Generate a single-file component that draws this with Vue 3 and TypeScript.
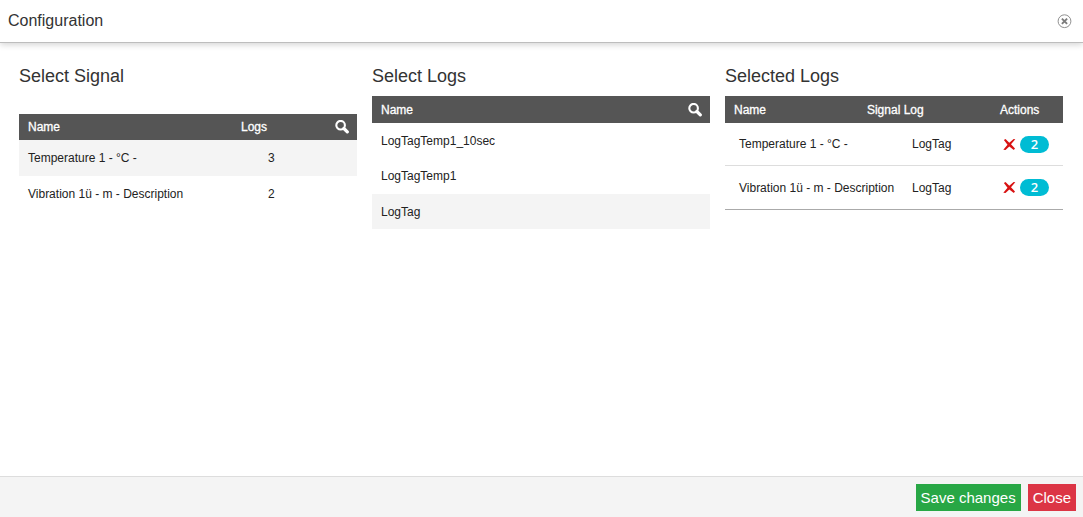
<script setup lang="ts">
import { ref } from 'vue'

interface Signal {
  name: string
  logs: number
}
interface SelectedLog {
  name: string
  log: string
  count: number
}

const signals: Signal[] = [
  { name: 'Temperature 1 - °C -', logs: 3 },
  { name: 'Vibration 1ü - m - Description', logs: 2 },
]
const logs: string[] = ['LogTagTemp1_10sec', 'LogTagTemp1', 'LogTag']
const activeSignal = ref(0)
const activeLog = ref(2)
const selected = ref<SelectedLog[]>([
  { name: 'Temperature 1 - °C -', log: 'LogTag', count: 2 },
  { name: 'Vibration 1ü - m - Description', log: 'LogTag', count: 2 },
])

function remove(index: number) {
  selected.value.splice(index, 1)
}
</script>

<template>
  <div class="dialog" role="dialog" aria-labelledby="dialog-title">
    <header class="top">
      <h1 id="dialog-title">Configuration</h1>
      <button class="icon dismiss" type="button" aria-label="Dismiss">
        <svg width="15" height="15" viewBox="0 0 15 15" fill="none">
          <circle cx="7.5" cy="7.2" r="6.4" stroke="#909090" />
          <path d="M4.9 4.6l5.2 5.2M10.1 4.6l-5.2 5.2" stroke="#7c7c7c" stroke-width="1.9" />
        </svg>
      </button>
    </header>

    <main class="columns">
      <section>
        <h2 id="signal-title">Select Signal</h2>
        <table class="signals" aria-labelledby="signal-title">
          <thead>
            <tr>
              <th class="c-name">Name</th>
              <th class="c-logs">Logs</th>
              <th class="c-search">
                <button class="icon" type="button" aria-label="Search signals">
                  <svg width="14" height="14" viewBox="0 0 14 14" fill="none" stroke="#fff">
                    <circle cx="5.6" cy="5.2" r="4.3" stroke-width="2.1" />
                    <path d="M8.9 8.5l3.4 3.4" stroke-width="3.2" stroke-linecap="round" />
                  </svg>
                </button>
              </th>
            </tr>
          </thead>
          <tbody>
            <tr v-for="(s, i) in signals" :key="s.name" :class="{ active: i === activeSignal }" @click="activeSignal = i">
              <td>{{ s.name }}</td>
              <td class="count">{{ s.logs }}</td>
              <td></td>
            </tr>
          </tbody>
        </table>
      </section>

      <section>
        <h2 id="logs-title">Select Logs</h2>
        <table class="logs" aria-labelledby="logs-title">
          <thead>
            <tr>
              <th>Name</th>
              <th class="c-search">
                <button class="icon" type="button" aria-label="Search logs">
                  <svg width="14" height="14" viewBox="0 0 14 14" fill="none" stroke="#fff">
                    <circle cx="5.6" cy="5.2" r="4.3" stroke-width="2.1" />
                    <path d="M8.9 8.5l3.4 3.4" stroke-width="3.2" stroke-linecap="round" />
                  </svg>
                </button>
              </th>
            </tr>
          </thead>
          <tbody>
            <tr v-for="(l, i) in logs" :key="l" :class="{ active: i === activeLog }" @click="activeLog = i">
              <td colspan="2">{{ l }}</td>
            </tr>
          </tbody>
        </table>
      </section>

      <section>
        <h2 id="selected-title">Selected Logs</h2>
        <table class="selected" aria-labelledby="selected-title">
          <colgroup>
            <col class="s-name">
            <col class="s-indent">
            <col>
            <col class="s-actions">
          </colgroup>
          <thead>
            <tr>
              <th>Name</th>
              <th class="flush" colspan="2">Signal Log</th>
              <th class="flush">Actions</th>
            </tr>
          </thead>
          <tbody>
            <tr v-for="(s, i) in selected" :key="s.name">
              <td colspan="2">{{ s.name }}</td>
              <td class="flush">{{ s.log }}</td>
              <td class="flush">
                <div class="actions">
                  <button class="icon" type="button" aria-label="Remove" @click="remove(i)">
                    <svg width="13" height="13" viewBox="0 0 13 13">
                      <path d="M.9 2L2.5 .9L6.3 4.7L10.6 1L12.3 1.2L8 6.3L12 10.6L10.8 12.1L6.3 8.4L2.5 12L.3 11.8L4.5 6.7Z" fill="#d81212" />
                    </svg>
                  </button>
                  <span class="badge">{{ s.count }}</span>
                </div>
              </td>
            </tr>
          </tbody>
        </table>
      </section>
    </main>

    <footer class="bottom">
      <button class="btn save" type="button">Save changes</button>
      <button class="btn close" type="button">Close</button>
    </footer>
  </div>
</template>

<style>
body {
  margin: 0;
  background: #fff;
}
</style>

<style scoped>
.dialog {
  display: flex;
  flex-direction: column;
  min-height: 100vh;
  font-family: "Liberation Sans", Arial, sans-serif;
  font-size: 12px;
  line-height: 16px;
  color: #222;
}
button {
  font-family: inherit;
  border: 0;
  cursor: pointer;
}
.top {
  display: flex;
  align-items: center;
  justify-content: space-between;
  height: 42px;
  padding: 0 11px 0 8px;
  border-bottom: 1px solid #bdbdbd;
  box-shadow: 0 2px 6px rgba(0, 0, 0, 0.16);
}
h1 {
  margin: 0;
  font-size: 16px;
  font-weight: 400;
  line-height: 20px;
  color: #333;
}
.icon {
  display: block;
  padding: 0;
  background: none;
}
.icon svg {
  display: block;
}
.columns {
  flex: 1;
  display: grid;
  grid-template-columns: repeat(3, minmax(0, 1fr));
  gap: 15px;
  align-items: start;
  padding: 21px 20px 20px 19px;
}
h2 {
  margin: 0 0 8px;
  font-size: 18px;
  font-weight: 400;
  line-height: 24px;
  color: #333;
}
table {
  width: 100%;
  table-layout: fixed;
  border-collapse: separate;
  border-spacing: 0;
}
th,
td {
  box-sizing: border-box;
  padding: 0 0 0 9px;
  text-align: left;
  font-weight: 400;
  white-space: nowrap;
}
th {
  height: 27px;
  background: #555;
  color: #fff;
  -webkit-text-stroke: 0.3px #fff;
}
td {
  height: 36px;
}
.active td {
  background: #f4f4f4;
}
.signals {
  margin-top: 26px;
}
.signals th {
  height: 26px;
}
.c-logs {
  width: 85px;
  padding-left: 0;
}
.c-search {
  width: 31px;
}
.signals .count {
  padding-left: 27px;
}
.logs td {
  height: 35px;
}
.logs tr:nth-child(2) td {
  height: 36px;
}
.s-name {
  width: 42%;
}
.s-indent {
  width: 45px;
}
.s-actions {
  width: 63px;
}
.selected td {
  height: 43px;
  padding-left: 14px;
  border-bottom: 1px solid #ddd;
}
.selected tr:last-child td {
  height: 44px;
  border-bottom-color: #aaa;
}
.selected .flush {
  padding-left: 0;
}
.actions {
  display: flex;
  align-items: center;
  gap: 4px;
  padding-left: 3px;
}
.badge {
  width: 29px;
  border-radius: 9px;
  background: #00bcd4;
  color: #fff;
  font-family: "Open Sans", "Noto Sans", sans-serif;
  font-size: 13px;
  font-weight: 600;
  line-height: 17px;
  text-align: center;
}
.bottom {
  display: flex;
  justify-content: flex-end;
  gap: 7px;
  padding: 7px 7px 6px;
  border-top: 1px solid #ddd;
  background: #f4f4f4;
}
.btn {
  padding: 0 5px;
  font-size: 15px;
  line-height: 27px;
  color: #fff;
}
.save {
  background: #28a745;
}
.close {
  background: #dc3545;
}
</style>
